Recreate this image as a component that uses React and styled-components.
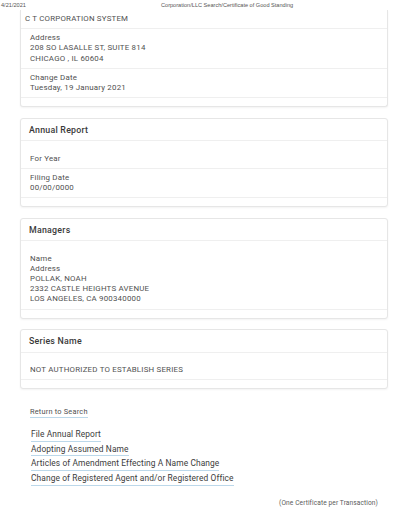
import React from "react";
import styled, { createGlobalStyle } from "styled-components";

const GlobalStyle = createGlobalStyle`
  html, body { margin: 0; padding: 0; background: #ffffff; }
  body { font-family: Roboto, "Noto Sans", "Liberation Sans", sans-serif; color: #4a4a4a; }
  * { box-sizing: border-box; }
`;

const Page = styled.div`
  width: 395px;
  min-height: 509px;
  display: flex;
  flex-direction: column;
`;

const PrintHeader = styled.header`
  height: 10px;
  display: grid;
  grid-template-columns: 160px auto;
  align-items: center;
  padding-left: 1px;
  font-family: "Liberation Sans", Arial, sans-serif;
  font-size: 5.6px;
  line-height: 10px;
  color: #555;
`;

const Content = styled.main`
  padding: 0 7px 0 20px;
  display: flex;
  flex-direction: column;
  gap: 10.6px;
`;

const Card = styled.section`
  background: #fff;
  border: 1px solid #e6e6e6;
  border-top: ${(p) => (p.$continued ? "none" : "1px solid #e6e6e6")};
  border-radius: ${(p) => (p.$continued ? "0 0 3px 3px" : "3px")};
  box-shadow: 0 1px 2px rgba(0, 0, 0, 0.05);
  display: flex;
  flex-direction: column;
`;

const CardHeader = styled.h2`
  margin: 0;
  height: 22.5px;
  padding: 0 8px;
  display: flex;
  align-items: center;
  font-size: 8.8px;
  font-weight: 500;
  letter-spacing: 0.25px;
  color: #3a3a3a;
  border-bottom: 1px solid #efefef;
`;

const CardBody = styled.div`
  padding-top: ${(p) => (p.$spaced ? "8.3px" : "0")};
  padding-bottom: 8px;
  display: flex;
  flex-direction: column;
`;

const Row = styled.div`
  padding: 4px ${(p) => (p.$tight ? "4px" : "9px")} 4px;
  border-bottom: 1px solid #efefef;
  font-size: 7.9px;
  letter-spacing: 0.2px;
  line-height: 10.2px;
  color: #505050;
`;

const Line = styled.div``;

const Links = styled.nav`
  display: flex;
  flex-direction: column;
  align-items: flex-start;
  padding-left: 31px;
`;

const ReturnLink = styled.a`
  margin-top: 18px;
  margin-left: -1px;
  font-size: 7.4px;
  letter-spacing: 0.2px;
  line-height: 10px;
  color: #505050;
  text-decoration: none;
  border-bottom: 1px solid #bcd8ea;
`;

const ActionList = styled.div`
  margin-top: 10px;
  display: flex;
  flex-direction: column;
  align-items: flex-start;
  gap: 1px;
`;

const ActionLink = styled.a`
  font-size: 8.4px;
  letter-spacing: 0.1px;
  line-height: 12.6px;
  color: #3c3c3c;
  text-decoration: none;
  border-bottom: 1px solid #bcd8ea;
`;

const Note = styled.p`
  margin: 13px 17px 0 0;
  align-self: flex-end;
  font-size: 6.6px;
  letter-spacing: 0.1px;
  line-height: 9px;
  color: #5a5a5a;
`;

const Footer = styled.div`
  display: flex;
  flex-direction: column;
`;

function InfoRow({ lines, tight }) {
  return (
    <Row $tight={tight}>
      {lines.map((l, i) => (
        <Line key={i}>{l}</Line>
      ))}
    </Row>
  );
}

export default function App() {
  return (
    <Page>
      <GlobalStyle />
      <PrintHeader>
        <span>4/21/2021</span>
        <span>Corporation/LLC Search/Certificate of Good Standing</span>
      </PrintHeader>
      <Content>
        <Card $continued>
          <CardBody>
            <InfoRow tight lines={["C T CORPORATION SYSTEM"]} />
            <InfoRow lines={["Address", "208 SO LASALLE ST, SUITE 814", "CHICAGO , IL 60604"]} />
            <InfoRow lines={["Change Date", "Tuesday, 19 January 2021"]} />
          </CardBody>
        </Card>

        <Card>
          <CardHeader>Annual Report</CardHeader>
          <CardBody $spaced>
            <InfoRow lines={["For Year"]} />
            <InfoRow lines={["Filing Date", "00/00/0000"]} />
          </CardBody>
        </Card>

        <Card>
          <CardHeader>Managers</CardHeader>
          <CardBody $spaced>
            <InfoRow
              lines={[
                "Name",
                "Address",
                "POLLAK, NOAH",
                "2332 CASTLE HEIGHTS AVENUE",
                "LOS ANGELES, CA 900340000",
              ]}
            />
          </CardBody>
        </Card>

        <Card>
          <CardHeader>Series Name</CardHeader>
          <CardBody $spaced>
            <InfoRow lines={["NOT AUTHORIZED TO ESTABLISH SERIES"]} />
          </CardBody>
        </Card>
      </Content>
      <Footer>
        <Links>
          <ReturnLink href="#">Return to Search</ReturnLink>
          <ActionList>
            <ActionLink href="#">File Annual Report</ActionLink>
            <ActionLink href="#">Adopting Assumed Name</ActionLink>
            <ActionLink href="#">Articles of Amendment Effecting A Name Change</ActionLink>
            <ActionLink href="#">Change of Registered Agent and/or Registered Office</ActionLink>
          </ActionList>
        </Links>
        <Note>(One Certificate per Transaction)</Note>
      </Footer>
    </Page>
  );
}
